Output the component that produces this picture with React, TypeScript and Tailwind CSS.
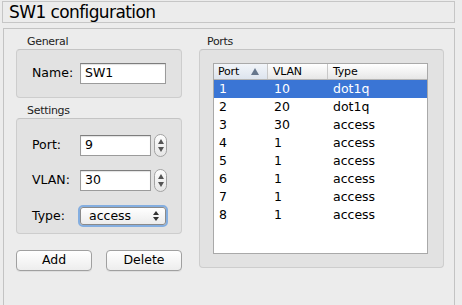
import React from "react";

const font = { fontFamily: '"DejaVu Sans", "Liberation Sans", sans-serif' };

const rows = [
  { port: "1", vlan: "10", type: "dot1q" },
  { port: "2", vlan: "20", type: "dot1q" },
  { port: "3", vlan: "30", type: "access" },
  { port: "4", vlan: "1", type: "access" },
  { port: "5", vlan: "1", type: "access" },
  { port: "6", vlan: "1", type: "access" },
  { port: "7", vlan: "1", type: "access" },
  { port: "8", vlan: "1", type: "access" },
];

function Spinner() {
  return (
    <div className="ml-[3px] w-[13px] h-[23px] rounded-[7px] border border-[#a3a3a3] bg-gradient-to-b from-[#fdfdfd] to-[#e6e6e6] flex flex-col items-center justify-between py-[4px]">
      <svg width="6" height="5" viewBox="0 0 6 5">
        <polygon points="3,0 6,5 0,5" fill="#555" />
      </svg>
      <svg width="6" height="5" viewBox="0 0 6 5">
        <polygon points="0,0 6,0 3,5" fill="#555" />
      </svg>
    </div>
  );
}

function TextField({ value, width }: { value: string; width: string }) {
  return (
    <div
      className={`${width} h-[21px] bg-white border border-[#9b9b9b] border-t-[#7d7d7d] shadow-[inset_0_1px_1px_rgba(0,0,0,0.12)] flex items-center pl-[4px] text-[12.5px] text-black`}
    >
      {value}
    </div>
  );
}

export default function App() {
  return (
    <div className="w-[462px] h-[305px] bg-[#ececec] overflow-hidden relative" style={font}>
      <div className="ml-[2px] mt-[1px] w-[453px] h-[22px] border border-[#c6c6c6] flex items-center pl-[6px] text-[17px] tracking-[-0.6px] text-black leading-none">
        SW1 configuration
      </div>

      <div className="ml-[3px] mt-[5px] w-[452px] h-[290px] border border-[#c3c3c3] border-b-0 flex pl-[12px] pt-[6px] gap-[17px]">
        {/* left column */}
        <div className="w-[166px] flex flex-col">
          <div className="text-[11px] tracking-[-0.3px] leading-[14px] pl-[11px] text-[#222]">General</div>
          <div className="h-[49px] rounded-[4px] bg-[#e2e2e2] border border-[#cdcdcd] border-t-[#c4c4c4] flex items-center pl-[15px]">
            <span className="text-[12.5px] w-[48px]">Name:</span>
            <TextField value="SW1" width="w-[86px]" />
          </div>

          <div className="mt-[6px] text-[11px] tracking-[-0.3px] leading-[14px] pl-[11px] text-[#222]">Settings</div>
          <div className="h-[116px] rounded-[4px] bg-[#e2e2e2] border border-[#cdcdcd] border-t-[#c4c4c4] flex flex-col pl-[15px] pt-[15px] gap-[12px]">
            <div className="flex items-center">
              <span className="text-[12.5px] w-[48px]">Port:</span>
              <TextField value="9" width="w-[71px]" />
              <Spinner />
            </div>
            <div className="flex items-center">
              <span className="text-[12.5px] w-[48px]">VLAN:</span>
              <TextField value="30" width="w-[71px]" />
              <Spinner />
            </div>
            <div className="flex items-center mt-[1px]">
              <span className="text-[12.5px] w-[46px]">Type:</span>
              <div className="w-[90px] h-[22px] rounded-[5px] border-[2px] border-[#84aee0] p-0">
                <div className="w-full h-full rounded-[3px] border border-[#8a8a8a] bg-gradient-to-b from-[#ffffff] to-[#ececec] flex items-center justify-between pl-[8px] pr-[6px] text-[12.5px]">
                  <span className="leading-none">access</span>
                  <svg width="6" height="10" viewBox="0 0 6 10">
                    <polygon points="3,0 6,4 0,4" fill="#333" />
                    <polygon points="0,6 6,6 3,10" fill="#333" />
                  </svg>
                </div>
              </div>
            </div>
          </div>

          <div className="mt-[16px] flex justify-between">
            <button className="w-[76px] h-[21px] rounded-[4px] border border-[#a0a0a0] bg-gradient-to-b from-[#ffffff] to-[#ededed] shadow-[0_1px_0_rgba(0,0,0,0.06)] text-[12.5px] leading-none text-black">
              Add
            </button>
            <button className="w-[76px] h-[21px] rounded-[4px] border border-[#a0a0a0] bg-gradient-to-b from-[#ffffff] to-[#ededed] shadow-[0_1px_0_rgba(0,0,0,0.06)] text-[12.5px] leading-none text-black">
              Delete
            </button>
          </div>
        </div>

        {/* right column */}
        <div className="w-[245px] flex flex-col">
          <div className="text-[11px] tracking-[-0.3px] leading-[14px] pl-[8px] text-[#222]">Ports</div>
          <div className="h-[219px] rounded-[4px] bg-[#e2e2e2] border border-[#cdcdcd] border-t-[#c4c4c4] pl-[13px] pt-[13px]">
            <div className="w-[215px] h-[191px] bg-white border border-[#a9a9a9]">
              <div className="flex h-[16px] border-b border-[#b4b4b4] bg-gradient-to-b from-[#ffffff] to-[#e7e7e7] text-[11px] tracking-[-0.2px] leading-none items-center">
                <div className="w-[54px] h-full flex items-center justify-between pl-[4px] pr-[8px] border-r border-[#c8c8c8] bg-gradient-to-b from-[#f2f5f9] to-[#dde4ee]">
                  <span>Port</span>
                  <svg width="8" height="7" viewBox="0 0 8 7">
                    <polygon points="4,0 8,7 0,7" fill="#66768c" />
                  </svg>
                </div>
                <div className="w-[60px] h-full flex items-center pl-[5px] border-r border-[#c8c8c8]">VLAN</div>
                <div className="flex-1 h-full flex items-center pl-[5px]">Type</div>
              </div>
              {rows.map((r, i) => (
                <div
                  key={r.port}
                  className={`flex h-[18px] items-center text-[12.5px] leading-none ${
                    i === 0 ? "bg-[#3a75d5] text-white" : "text-black"
                  }`}
                >
                  <div className="w-[54px] pl-[5px]">{r.port}</div>
                  <div className="w-[60px] pl-[6px]">{r.vlan}</div>
                  <div className="flex-1 pl-[5px]">{r.type}</div>
                </div>
              ))}
            </div>
          </div>
        </div>
      </div>
    </div>
  );
}
